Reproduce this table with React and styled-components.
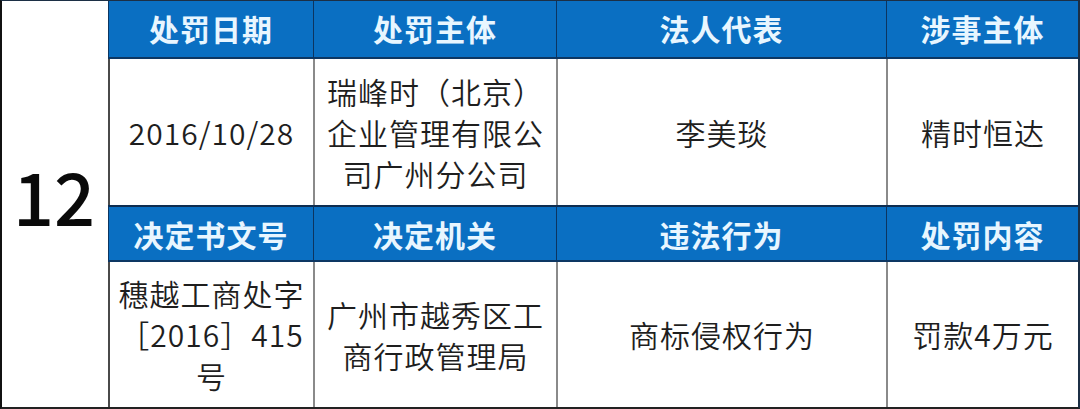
import React from "react";
import styled, { createGlobalStyle } from "styled-components";

const Global = createGlobalStyle`
  html, body { margin: 0; padding: 0; background: #fff; }
  body { font-family: "Noto Sans CJK SC", "Noto Sans", sans-serif; }
`;

const Sheet = styled.div`
  box-sizing: border-box;
  width: 1080px;
  height: 409px;
  display: grid;
  grid-template-columns: 106px 205px 243px 330px 192px;
  grid-template-rows: 58px 146px 57px 145px;
  border-top: 1px solid #1c2f45;
  border-left: 2px solid #111;
  border-right: 2px solid #1c2f45;
  border-bottom: 2px solid #222;
  background: #fff;
`;

const NumberCell = styled.div`
  grid-column: 1;
  grid-row: 1 / 5;
  display: flex;
  align-items: center;
  justify-content: center;
  font-family: "Noto Sans CJK SC", "Noto Sans", sans-serif;
  font-size: 72px;
  font-weight: 500;
  color: #0a0a0a;
  padding-bottom: 20px;
  padding-right: 2px;
`;

const HeadCell = styled.div`
  box-sizing: border-box;
  display: flex;
  align-items: center;
  justify-content: center;
  background: #0a6fc2;
  color: #e8f6ff;
  font-size: 30px;
  font-weight: 700;
  letter-spacing: 1px;
  border-left: 1px solid #0c3560;
  border-bottom: 2px solid #0d3763;
  border-top: ${(p) => (p.$second ? "2px solid #0e2d50" : "0")};
  padding-bottom: ${(p) => (p.$second ? "0" : "2px")};
`;

const DataCell = styled.div`
  box-sizing: border-box;
  display: flex;
  align-items: center;
  justify-content: center;
  text-align: center;
  color: #1e1e1e;
  font-size: 30px;
  font-weight: 350;
  line-height: 41px;
  letter-spacing: 1px;
  border-left: 2px solid ${(p) => (p.$first ? "#4a4a4a" : "#8a8a8a")};
  padding: 0 4px;
`;

const Lines = styled.div`
  display: flex;
  flex-direction: column;
  align-items: center;
  white-space: nowrap;
`;

const rows = [
  {
    head: ["处罚日期", "处罚主体", "法人代表", "涉事主体"],
    data: [
      ["2016/10/28"],
      ["瑞峰时（北京）", "企业管理有限公", "司广州分公司"],
      ["李美琰"],
      ["精时恒达"],
    ],
  },
  {
    head: ["决定书文号", "决定机关", "违法行为", "处罚内容"],
    data: [
      ["穗越工商处字", "［2016］415", "号"],
      ["广州市越秀区工", "商行政管理局"],
      ["商标侵权行为"],
      ["罚款4万元"],
    ],
  },
];

export default function App() {
  return (
    <>
      <Global />
      <Sheet>
        <NumberCell>12</NumberCell>
        {rows.map((r, ri) => (
          <React.Fragment key={ri}>
            {r.head.map((h, i) => (
              <HeadCell key={"h" + i} $second={ri === 1}>
                {h}
              </HeadCell>
            ))}
            {r.data.map((d, i) => (
              <DataCell key={"d" + i} $first={i === 0}>
                <Lines>
                  {d.map((line, li) => (
                    <span key={li}>{line}</span>
                  ))}
                </Lines>
              </DataCell>
            ))}
          </React.Fragment>
        ))}
      </Sheet>
    </>
  );
}
